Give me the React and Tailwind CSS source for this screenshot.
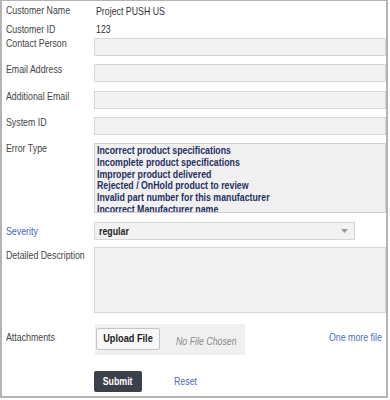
import React from 'react';

const errorTypes = [
  'Incorrect product specifications',
  'Incomplete product specifications',
  'Improper product delivered',
  'Rejected / OnHold product to review',
  'Invalid part number for this manufacturer',
  'Incorrect Manufacturer name',
];

// the source screenshot is horizontally squeezed, so text is narrowed to match
function T({ children, className = '' }) {
  return <span className={`inline-block whitespace-nowrap origin-left scale-x-[0.8] ${className}`}>{children}</span>;
}

function Label({ children, className = '', color = 'text-[#444]' }) {
  return (
    <div className={`w-[88px] shrink-0 text-[11px] leading-[13px] ${color} ${className}`}>
      <T>{children}</T>
    </div>
  );
}

function TextInput() {
  return <div className="h-[18px] flex-1 border border-[#d6d6d6] bg-[#f2f2f2]" />;
}

export default function App() {
  return (
    <div className="bg-white" style={{ fontFamily: '"Liberation Sans", Arial, sans-serif' }}>
      <div className="w-[388px] h-[398px] border-l-2 border-b-2 border-r-2 border-t border-[#b4b4b4] pl-[4px] pt-[2px] overflow-hidden">
        <div className="flex items-center h-[14px]">
          <Label>Customer Name</Label>
          <div className="text-[11px] text-[#333] ml-[2px] mt-[3px]"><T>Project PUSH US</T></div>
        </div>
        <div className="flex items-center h-[14px] mt-[5px]">
          <Label>Customer ID</Label>
          <div className="text-[11px] text-[#333] ml-[2px] mt-[1px]"><T>123</T></div>
        </div>

        <div className="flex items-start mt-[2px]">
          <Label className="-mt-[1px]">Contact Person</Label>
          <TextInput />
        </div>
        <div className="flex items-start mt-[8px]">
          <Label className="mt-[-1px]">Email Address</Label>
          <TextInput />
        </div>
        <div className="flex items-start mt-[9px]">
          <Label className="mt-[-1px]">Additional Email</Label>
          <TextInput />
        </div>
        <div className="flex items-start mt-[8px]">
          <Label className="mt-[-1px]">System ID</Label>
          <TextInput />
        </div>

        <div className="flex items-start mt-[8px]">
          <Label className="mt-[-1px]">Error Type</Label>
          <div className="h-[70px] flex-1 border border-[#d0d0d0] bg-[#f0f0f0] pl-[2px] pt-[1px] overflow-hidden">
            {errorTypes.map((t) => (
              <div key={t} className="text-[11px] leading-[11.8px] font-bold text-[#1f2f62] whitespace-nowrap origin-left scale-x-[0.8]">
                {t}
              </div>
            ))}
          </div>
        </div>

        <div className="flex items-center mt-[9px]">
          <Label color="text-[#4067bd]">Severity</Label>
          <div className="h-[18px] w-[261px] border border-[#d6d6d6] bg-[#f2f2f2] flex items-center justify-between pl-[4px] pr-[6px]">
            <T className="text-[11px] font-bold text-[#222]">regular</T>
            <svg width="7" height="4" viewBox="0 0 7 4"><path d="M0 0h7L3.5 4z" fill="#999" /></svg>
          </div>
        </div>

        <div className="flex items-start mt-[7px]">
          <Label className="mt-[2px]">Detailed Description</Label>
          <div className="h-[66px] flex-1 border border-[#d6d6d6] bg-[#f2f2f2]" />
        </div>

        <div className="flex items-center mt-[11px]">
          <Label className="mt-[-4px]">Attachments</Label>
          <div className="h-[31px] w-[150px] ml-[1px] bg-[#f0f0f0] flex items-start pl-[1px] pt-[4px]">
            <div className="h-[22px] w-[66px] border border-[#c4c4c4] bg-[#f8f8f8] rounded-[2px] flex items-center justify-center text-[11.5px] font-bold text-[#222]">
              <span className="inline-block whitespace-nowrap scale-x-[0.8]">Upload File</span>
            </div>
            <T className="ml-[16px] mt-[5px] text-[11px] italic text-[#888]">No File Chosen</T>
          </div>
          <div className="ml-auto w-[57px] mt-[-4px] text-[11px] text-[#4a6ec2]">
            <T>One more file</T>
          </div>
        </div>

        <div className="flex items-center mt-[16px] pl-[88px]">
          <div className="h-[21px] w-[48px] rounded-[2px] bg-[#3b404c] flex items-center justify-center text-[11px] font-bold text-white">
            <span className="inline-block whitespace-nowrap scale-x-[0.8]">Submit</span>
          </div>
          <T className="ml-[32px] text-[11px] text-[#4a6ec2]">Reset</T>
        </div>
      </div>
    </div>
  );
}
